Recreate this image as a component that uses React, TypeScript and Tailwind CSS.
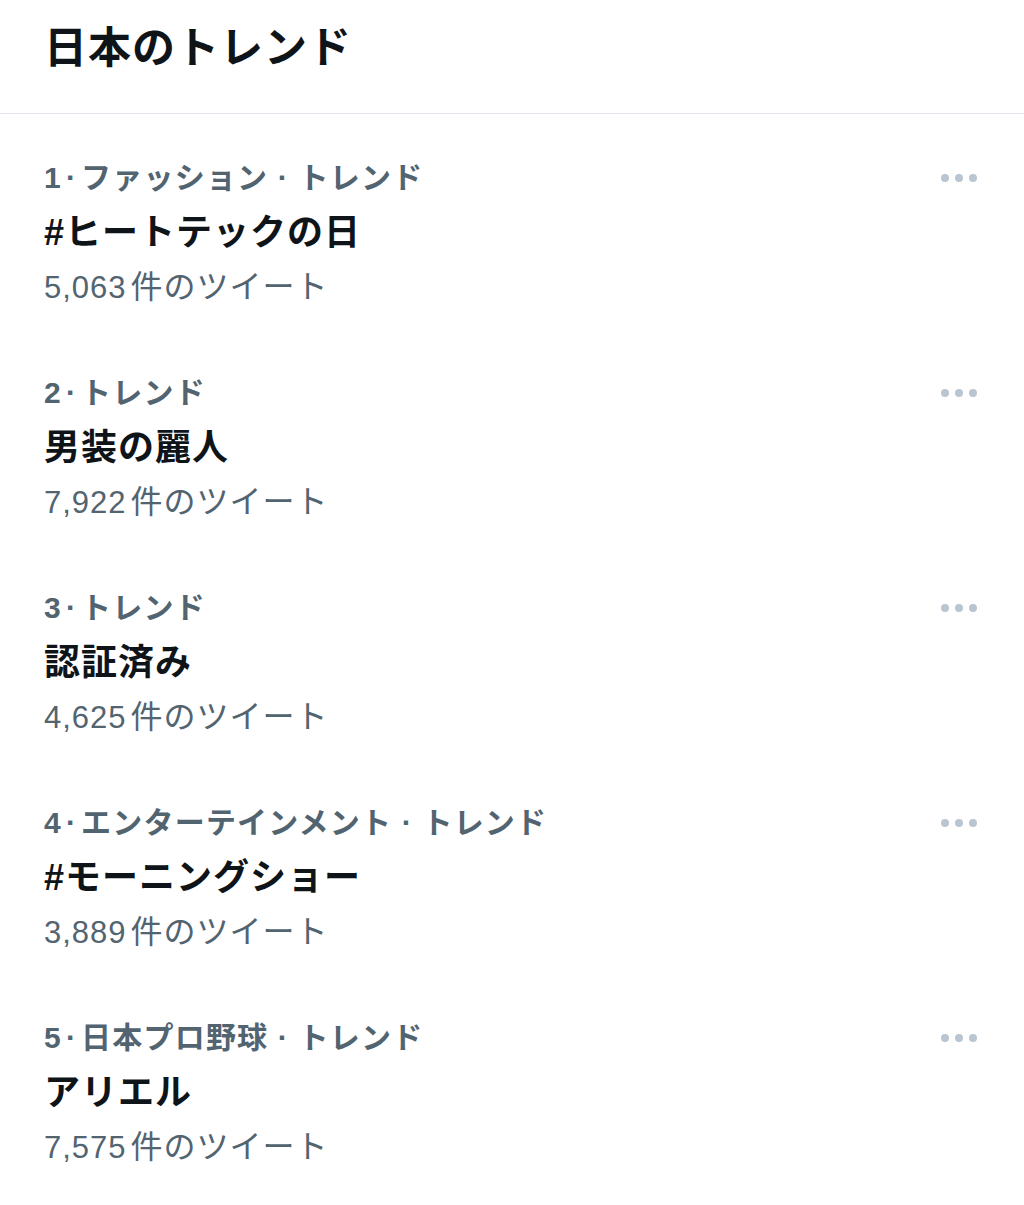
const TRENDS = [
  { rank: 1, category: "ファッション · トレンド", title: "#ヒートテックの日", count: "5,063" },
  { rank: 2, category: "トレンド", title: "男装の麗人", count: "7,922" },
  { rank: 3, category: "トレンド", title: "認証済み", count: "4,625" },
  { rank: 4, category: "エンターテインメント · トレンド", title: "#モーニングショー", count: "3,889" },
  { rank: 5, category: "日本プロ野球 · トレンド", title: "アリエル", count: "7,575" },
];

function MoreDots() {
  return (
    <div className="self-start flex items-center gap-[6px] pt-[25px]">
      <span className="w-[8px] h-[8px] rounded-full bg-[#b9c6d1]" />
      <span className="w-[8px] h-[8px] rounded-full bg-[#b9c6d1]" />
      <span className="w-[8px] h-[8px] rounded-full bg-[#b9c6d1]" />
    </div>
  );
}

export default function App() {
  return (
    <div
      className="w-[1024px] h-[1205px] bg-white text-[#0f1419] overflow-hidden"
      style={{ fontFamily: '"Liberation Sans", "Noto Sans CJK JP", sans-serif' }}
    >
      {/* Header */}
      <div className="h-[114px] border-b border-[#dfe5ea] px-[44px] pt-[19px]">
        <h1 className="text-[43px] leading-[58px] font-bold tracking-[1px]">日本のトレンド</h1>
      </div>

      {/* Trend list */}
      <div className="flex flex-col gap-[49px] pt-[35px]">
        {TRENDS.map((t) => (
          <div key={t.rank} className="flex justify-between pl-[44px] pr-[47px]">
            <div className="flex flex-col">
              <div className="text-[30px] leading-[57px] font-semibold text-[#536471] tracking-[1.2px]">
                {t.rank}
                <span className="mx-[4px]">·</span>
                {t.category}
              </div>
              <div className="text-[36px] leading-[54px] font-bold tracking-[1px]">{t.title}</div>
              <div className="text-[31px] leading-[54px] text-[#536471] tracking-[1px]">
                {t.count}
                <span className="ml-[4px] text-[32px]">件のツイート</span>
              </div>
            </div>
            <MoreDots />
          </div>
        ))}
      </div>
    </div>
  );
}
